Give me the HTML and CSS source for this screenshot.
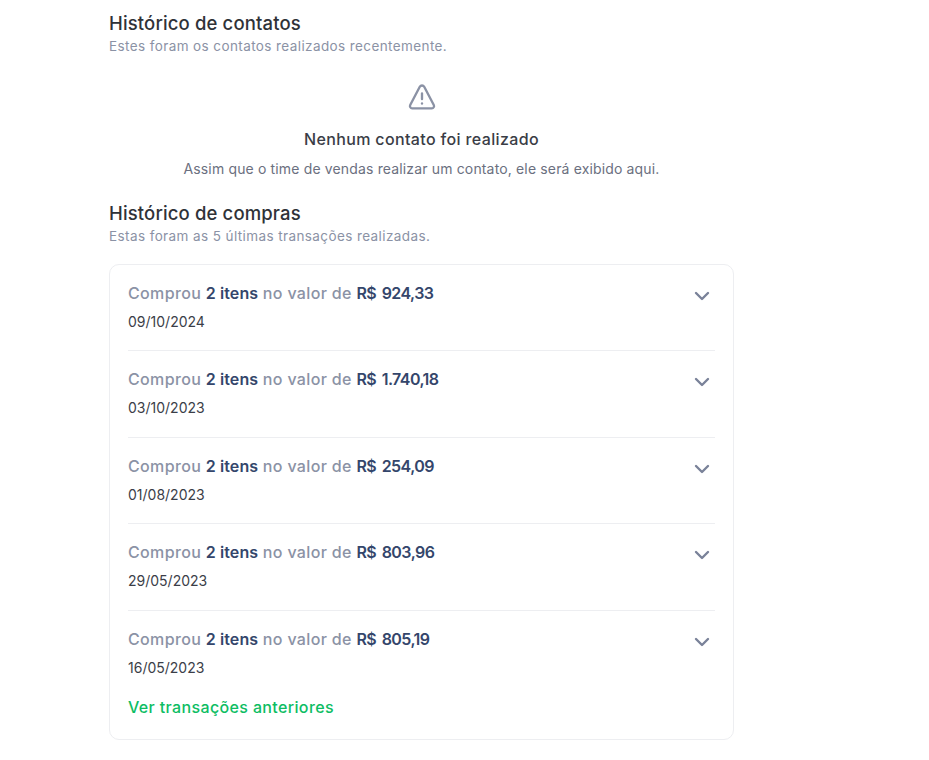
FILE: index.html
```html
<!DOCTYPE html>
<html lang="pt-BR">
<head>
<meta charset="utf-8">
<title>Histórico</title>
<link rel="stylesheet" href="styles.css">
</head>
<body>
<main class="page">
  <section class="section">
    <h2 class="title">Histórico de contatos</h2>
    <p class="subtitle">Estes foram os contatos realizados recentemente.</p>
  </section>
  <section class="empty">
    <svg class="warn" width="28" height="28" viewBox="0 0 24 24" fill="none" stroke="#8b92a5" stroke-width="2" stroke-linecap="round" stroke-linejoin="round"><path d="M10.1 3.2 1.9 18.9a1.9 1.9 0 0 0 1.7 2.8h16.8a1.9 1.9 0 0 0 1.7-2.8L13.9 3.2a2.2 2.2 0 0 0-3.8 0z"/><path d="M12 9v4.8"/><path d="M12 17.6v.01"/></svg>
    <h3 class="empty-title">Nenhum contato foi realizado</h3>
    <p class="empty-text">Assim que o time de vendas realizar um contato, ele será exibido aqui.</p>
  </section>
  <section class="section">
    <h2 class="title">Histórico de compras</h2>
    <p class="subtitle">Estas foram as 5 últimas transações realizadas.</p>
  </section>
  <div class="card">
    <div class="row">
      <div class="row-text">
        <p class="line">Comprou <b class="qty">2 itens</b> no valor de <b class="amt">R$ 924,33</b></p>
        <p class="date">09/10/2024</p>
      </div>
      <svg class="chev" width="16" height="10" viewBox="0 0 16 10" fill="none" stroke="#7a8299" stroke-width="2.4" stroke-linecap="round" stroke-linejoin="round"><path d="M2 2l6 6 6-6"/></svg>
    </div>
    <div class="row">
      <div class="row-text">
        <p class="line">Comprou <b class="qty">2 itens</b> no valor de <b class="amt">R$ 1.740,18</b></p>
        <p class="date">03/10/2023</p>
      </div>
      <svg class="chev" width="16" height="10" viewBox="0 0 16 10" fill="none" stroke="#7a8299" stroke-width="2.4" stroke-linecap="round" stroke-linejoin="round"><path d="M2 2l6 6 6-6"/></svg>
    </div>
    <div class="row">
      <div class="row-text">
        <p class="line">Comprou <b class="qty">2 itens</b> no valor de <b class="amt">R$ 254,09</b></p>
        <p class="date">01/08/2023</p>
      </div>
      <svg class="chev" width="16" height="10" viewBox="0 0 16 10" fill="none" stroke="#7a8299" stroke-width="2.4" stroke-linecap="round" stroke-linejoin="round"><path d="M2 2l6 6 6-6"/></svg>
    </div>
    <div class="row">
      <div class="row-text">
        <p class="line">Comprou <b class="qty">2 itens</b> no valor de <b class="amt">R$ 803,96</b></p>
        <p class="date">29/05/2023</p>
      </div>
      <svg class="chev" width="16" height="10" viewBox="0 0 16 10" fill="none" stroke="#7a8299" stroke-width="2.4" stroke-linecap="round" stroke-linejoin="round"><path d="M2 2l6 6 6-6"/></svg>
    </div>
    <div class="row last">
      <div class="row-text">
        <p class="line">Comprou <b class="qty">2 itens</b> no valor de <b class="amt">R$ 805,19</b></p>
        <p class="date">16/05/2023</p>
      </div>
      <svg class="chev" width="16" height="10" viewBox="0 0 16 10" fill="none" stroke="#7a8299" stroke-width="2.4" stroke-linecap="round" stroke-linejoin="round"><path d="M2 2l6 6 6-6"/></svg>
    </div>
    <a class="more" href="#">Ver transações anteriores</a>
  </div>
</main>
</body>
</html>
```
FILE: styles.css
```css
* { box-sizing: border-box; }
html, body { margin: 0; background: #fff; }
body { font-family: Inter, "Noto Sans", sans-serif; color: #33353d; }
.page { width: 625px; margin-left: 109px; padding-top: 13px; padding-bottom: 20px; }
p, h2, h3 { margin: 0; }
.section { display: flex; flex-direction: column; }
.title { font-size: 18.5px; line-height: 20px; font-weight: 500; color: #2f3238; letter-spacing: 0.14px; }
.subtitle { font-size: 13.5px; line-height: 20px; margin-top: 2.6px; color: #8b92a5; letter-spacing: 0.4px; }
.empty { display: flex; flex-direction: column; align-items: center; padding-top: 27.4px; padding-bottom: 24px; }
.warn { display: block; }
.empty-title { font-size: 16px; line-height: 20px; font-weight: 500; margin-top: 18px; color: #3a3d46; letter-spacing: 0.36px; }
.empty-text { font-size: 14px; line-height: 20px; margin-top: 10px; color: #6b7080; letter-spacing: 0.15px; }
.card { margin-top: 18.4px; border: 1px solid #edeef1; border-radius: 10px; padding: 0 18px 22px; }
.row { display: flex; justify-content: space-between; align-items: flex-start; height: 86.5px; padding-top: 18px; border-bottom: 1px solid #edeef1; }
.row.last { border-bottom: 0; height: 86px; }
.row-text { display: flex; flex-direction: column; }
.line { font-size: 16px; line-height: 20px; color: #8b92a5; font-weight: 500; letter-spacing: 0.35px; }
.line b { font-weight: 600; color: #34466b; }
.line .qty { letter-spacing: 0.1px; }
.line .amt { letter-spacing: -0.55px; word-spacing: 2px; }
.date { font-size: 14px; line-height: 20px; margin-top: 9px; color: #3b3e48; }
.chev { margin-top: 8px; margin-right: 5px; }
.more { display: block; font-size: 16px; line-height: 20px; font-weight: 500; color: #0dbd63; text-decoration: none; letter-spacing: 0.36px; }
```
